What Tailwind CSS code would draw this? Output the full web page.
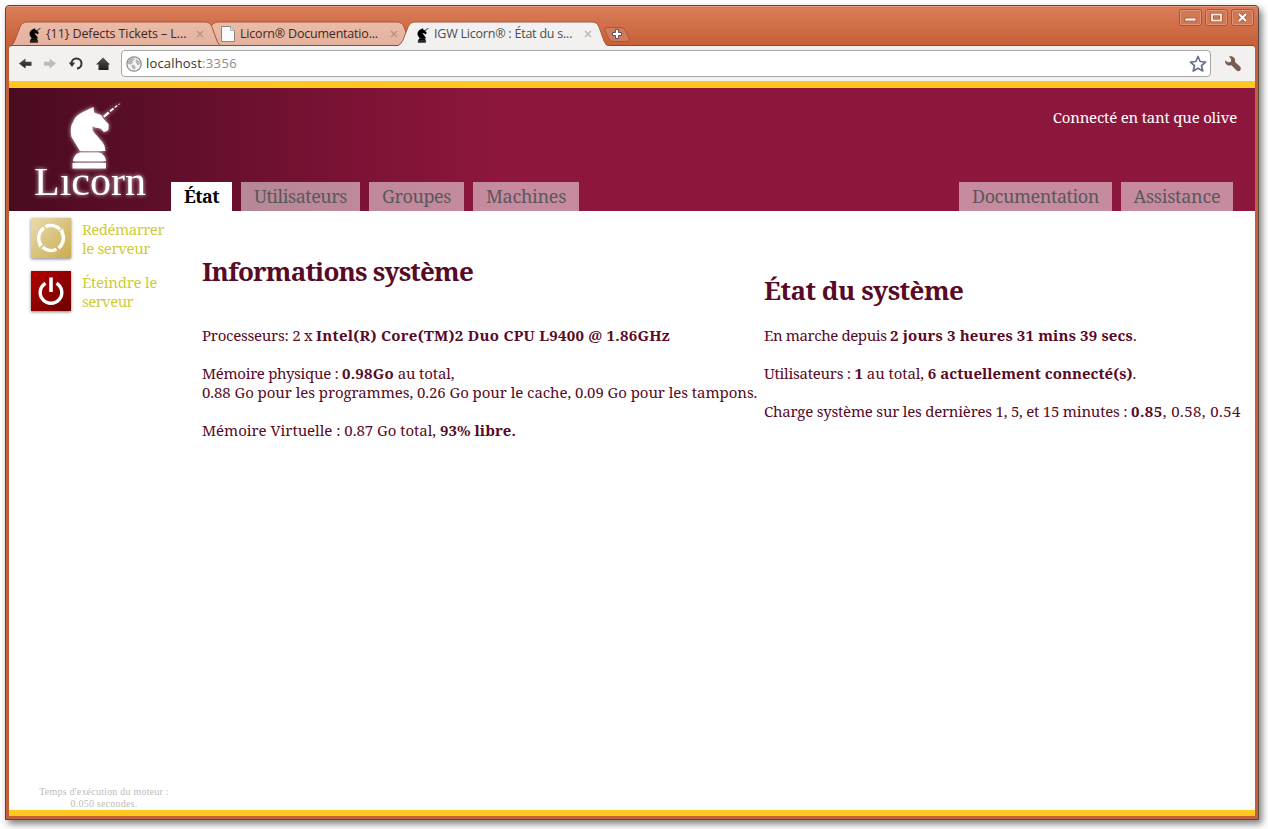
<!DOCTYPE html>
<html lang="fr">
<head>
<meta charset="utf-8">
<title>IGW Licorn® : État du système</title>
<script src="https://cdn.jsdelivr.net/npm/@tailwindcss/browser@4"></script>
</head>
<body class="w-[1268px] h-[829px] bg-white overflow-hidden">
<svg width="0" height="0" class="absolute">
  <symbol id="knight" viewBox="0 0 60 72">
    <path d="M10.500 65.500 V60 H44 V65.500 Z M11 58.300 C11.500 53.500 14 50.500 18 49.500 H36.500 C41 50.500 43.500 53.500 44 58.300 Z M18 48 L9.500 34 C8.500 30 8.500 26 9.500 22 L13 15 C16 11 20 9.500 24 7.500 L31.500 4 L32 9.500 L39 12 L41.500 16 L46.500 21 V26.500 L45 28 L42 29 L38.500 25.500 L33 24.500 L30.500 23 L30.500 27 C34 33 40 37 42.500 43 L43.500 48 Z"/>
    <path d="M41 13 L46 8.500 L47.500 10.500 L42.500 14.500 Z M47.500 7.500 L51 4.800 L52 6.300 L48.500 9 Z M52.300 4 L55 2 L55.700 3 L53 5 Z M56 1.500 L58.500 0 L57 2 Z"/>
  </symbol>
</svg>
<div class="ml-[5px] mt-[5px] inline-flex w-[1254px] h-[815px] flex-col overflow-hidden rounded-t-[4px] border border-[#5a4740] bg-[#c1613a] shadow-[3px_4px_7px_rgba(0,0,0,0.5)] align-top">

  <header class="relative flex h-[40px] w-full shrink-0 border-t border-[#e59a7c] bg-linear-to-b from-[#d97d59] to-[#c55f36]">
    <svg class="absolute left-0 top-0" width="1252" height="39" viewBox="6 7 1252 39">
      <defs><linearGradient id="tab" x1="0" y1="0" x2="0" y2="1"><stop offset="0" stop-color="#ecbca8"/><stop offset="1" stop-color="#e3b19d"/></linearGradient></defs>
      <path d="M209 46 L209 29 Q213 22 218 22 H397 Q402 22 404 27 L411 46 Z" fill="url(#tab)" stroke="#a7583a"/>
      <path d="M10 46 Q14 44 15 40 L20 27 Q22 22 27 22 H205 Q210 22 212 27 L217 41 Q219 46 222 46 Z" fill="url(#tab)" stroke="#a7583a"/>
      <path d="M604.500 30 Q604.500 27.500 607 27.500 H621 Q624 27.500 625 30 L629 38 Q630 41.500 627 41.500 H613 Q610 41.500 609 39 Z" fill="#cf7b5c" stroke="#a9583b"/>
      <path d="M10 45.500 H1254" stroke="#95472a"/>
      <path d="M398 46 Q401.500 44 403 40 L408 27 Q410 22 414 22 H592 Q597 22 599 27 L604 41 Q605.500 46 609 46 Z" fill="#f2f1f0"/>
      <path d="M398 45.500 Q401.500 44 403 40 L408 27 Q410 22 414 22 H592 Q597 22 599 27 L604 41 Q605.500 45.500 609 45.500" fill="none" stroke="#a7583a"/>
      <path d="M615.500 29.500 h3 v3 h3 v3 h-3 v3 h-3 v-3 h-3 v-3 h3z" fill="#fff" stroke="#5f5163"/>
    </svg>
    <div class="relative flex h-[22px] mt-[15px] font-['Open_Sans','Noto_Sans',sans-serif] text-[12.5px] leading-[24px] text-[#3c2a22] whitespace-pre">
      <div class="ml-[22px] flex w-[193px] items-center">
        <svg class="mt-[4px] h-[15px] w-[14px]" viewBox="5 2 54 66" fill="#000" stroke="#000" stroke-width="1.500"><use href="#knight" width="60" height="72"/></svg>
        <span class="ml-1 w-[150px] pt-[1px] tracking-[-0.1px]">{11} Defects Tickets – L...</span>
        <svg class="mt-[2px]" width="8" height="8"><path d="M1 1L7 7M7 1L1 7" stroke="#b89484" stroke-width="1.500"/></svg>
      </div>
      <div class="flex w-[195px] items-center">
        <svg class="mt-[2px]" width="14" height="16"><path d="M.5 .5H9.500L13.500 4.500V15.500H.500Z" fill="#fafafa" stroke="#8d8580"/><path d="M9.500 .5V4.500H13.500" fill="#ddd" stroke="#aaa"/></svg>
        <span class="ml-[5px] w-[150px] pt-[1px] tracking-[-0.2px]">Licorn® Documentatio...</span>
        <svg class="mt-[2px]" width="8" height="8"><path d="M1 1L7 7M7 1L1 7" stroke="#b89484" stroke-width="1.500"/></svg>
      </div>
      <div class="flex items-center text-[#4c4c4c]">
        <svg class="mt-[4px] h-[15px] w-[14px]" viewBox="5 2 54 66" fill="#000" stroke="#000" stroke-width="1.500"><use href="#knight" width="60" height="72"/></svg>
        <span class="ml-[4px] w-[150px] pt-[1px] tracking-[-0.22px]">IGW Licorn® : État du s...</span>
        <svg class="mt-[2px]" width="8" height="8"><path d="M1 1L7 7M7 1L1 7" stroke="#bdbab8" stroke-width="1.500"/></svg>
      </div>
    </div>
    <div class="relative ml-auto mr-[4px] mt-[2px] flex gap-[3px]">
      <svg width="23" height="17"><rect x=".5" y=".5" width="22" height="16" rx="2" fill="#d07755" stroke="#a95535"/><rect x="1.500" y="1.500" width="20" height="14" rx="1" fill="none" stroke="#df9477"/><rect x="6" y="9" width="11" height="3" fill="#fff" stroke="#a95535" stroke-width=".8"/></svg>
      <svg width="23" height="17"><rect x=".5" y=".5" width="22" height="16" rx="2" fill="#d07755" stroke="#a95535"/><rect x="1.500" y="1.500" width="20" height="14" rx="1" fill="none" stroke="#df9477"/><rect x="7" y="5.500" width="9" height="6" fill="none" stroke="#a95535" stroke-width="3.200"/><rect x="7" y="5.500" width="9" height="6" fill="none" stroke="#fdeee7" stroke-width="1.800"/></svg>
      <svg width="23" height="17"><rect x=".5" y=".5" width="22" height="16" rx="2" fill="#d07755" stroke="#a95535"/><rect x="1.500" y="1.500" width="20" height="14" rx="1" fill="none" stroke="#df9477"/><path d="M8 5L15 12M15 5L8 12" stroke="#a95535" stroke-width="3.500"/><path d="M8 5L15 12M15 5L8 12" stroke="#fff" stroke-width="2"/></svg>
    </div>
  </header>

  <div class="mx-[3px] flex h-[36px] shrink-0 items-center rounded-t-[3px] border-b border-[#c9c6c2] bg-[#f2f1f0]">
    <svg class="mr-1" width="108" height="36" viewBox="9 45 108 36">
      <defs><linearGradient id="ink" x1="0" y1="0" x2="0" y2="1"><stop offset="0" stop-color="#555"/><stop offset="1" stop-color="#1c1c1c"/></linearGradient></defs>
      <path d="M19 62.500 L25.500 57.500 V60.800 H31.500 V64.800 H25.500 V67.500 Z" fill="url(#ink)"/>
      <path d="M56 62.500 L49.500 57.500 V60.800 H44 V64.800 H49.500 V67.500 Z" fill="#bcbcbc"/>
      <path d="M71.500 62.500 A5 5 0 1 1 77 67.500" fill="none" stroke="#333" stroke-width="2"/>
      <path d="M68.800 61.500 H75.200 L72 66 Z" fill="#333"/>
      <path d="M96 63.500 L103 56.500 L110 63.500 H108.500 V69 H98.500 V63.500 Z" fill="url(#ink)"/>
    </svg>
    <div class="flex h-[27px] w-[1090px] items-center rounded-[4px] border border-[#a8a6a0] bg-white px-[4px] font-['Open_Sans','Noto_Sans',sans-serif] text-[13px] text-[#333]">
      <svg width="16" height="16" viewBox="0 0 16 16"><circle cx="8" cy="8" r="7.200" fill="#f4f4f4" stroke="#8b8b8b" stroke-width="1.300"/><path d="M2 5 Q4 2 7.500 2 L9 3.500 L6.500 5 L7 7 L4.500 8.500 L2 8Z M6 8.500 L9.500 10 L9 13.500 L7 13 L5.500 10.500Z M10 3 L13.500 5.500 L13.800 8 L12 9.500 L10.500 7.500 L9.500 5Z" fill="#b4b4b4"/></svg>
      <span class="ml-[4px] tracking-[0.17px]">localhost</span><span class="tracking-[0.37px] text-[#8c8c8c]">:3356</span>
      <svg class="ml-auto -mr-[1px]" width="18" height="18" viewBox="0 0 18 18"><path d="M9 1.500 L11.200 6.500 L16.600 7 L12.500 10.700 L13.800 16 L9 13.200 L4.200 16 L5.500 10.700 L1.400 7 L6.800 6.500 Z" fill="#fff" stroke="#66718a" stroke-width="1.700" stroke-linejoin="round"/></svg>
    </div>
    <svg class="ml-[13px]" width="18" height="18" viewBox="0 0 18 18"><path d="M5 1.500 C9 .5 12 3.500 11 7 L16.500 12 Q17.500 14 16 15.500 Q14.500 17 12.500 15.500 L7.500 10.300 C4 11.500 .8 9 1 5.500 L4.500 7.500 L7.200 6.500 L7 4 Z" fill="#7b5b4d"/></svg>
  </div>

  <div class="mx-[3px] flex h-[734px] shrink-0 flex-col border-y-[6px] border-[#ffc71f] bg-white font-['Noto_Serif','Droid_Serif','Liberation_Serif',serif]">
    <div class="flex h-[123px] shrink-0 bg-[#8c163c] bg-[linear-gradient(to_right,#4a0b20_0px,#5c0e28_140px,#7a1234_330px,#8c163c_485px)]">
      <svg class="shrink-0 overflow-visible [filter:drop-shadow(0_0_2px_rgba(255,255,255,0.75))]" width="162" height="123" viewBox="9 88 162 123" fill="#fff">
        <use href="#knight" x="62" y="103" width="60" height="72"/>
        <text x="34" y="195" font-family="Liberation Serif" font-size="40" textLength="112" lengthAdjust="spacingAndGlyphs">Lıcorn</text>
      </svg>
      <div class="flex flex-1 flex-col">
        <p class="mr-[18px] mt-[19px] text-right text-[15px] leading-[20px] tracking-[-0.2px] text-white">Connecté en tant que olive</p>
        <nav class="mt-auto flex gap-[9px] text-[18px] leading-[28px] text-[#58585c] whitespace-nowrap">
          <a class="h-[29px] w-[61px] bg-white text-center font-bold tracking-[-0.55px] text-black">État</a>
          <a class="h-[29px] w-[119px] bg-white/50 text-center tracking-[-0.46px]">Utilisateurs</a>
          <a class="h-[29px] w-[95px] bg-white/50 text-center tracking-[-0.43px]">Groupes</a>
          <a class="h-[29px] w-[106px] bg-white/50 text-center tracking-[-0.3px]">Machines</a>
          <a class="ml-auto h-[29px] w-[153px] bg-white/50 text-center tracking-[-0.43px]">Documentation</a>
          <a class="mr-[22px] h-[29px] w-[112px] bg-white/50 text-center tracking-[-0.24px]">Assistance</a>
        </nav>
      </div>
    </div>

    <div class="flex min-h-0 flex-1">
      <aside class="flex w-[193px] shrink-0 flex-col text-[15px] leading-[19px] text-[#cfcc38] whitespace-nowrap">
        <a class="ml-[22px] mt-[7px] flex h-[53px]">
          <svg class="h-10 w-10 shadow-[0_1px_3px_rgba(0,0,0,0.5)]" viewBox="0 0 40 40"><defs><linearGradient id="gold" x1="0" y1="0" x2="1" y2="1"><stop offset="0" stop-color="#e9dbb0"/><stop offset="1" stop-color="#c9ad4c"/></linearGradient></defs><rect width="40" height="40" fill="url(#gold)"/><g fill="none" stroke="#fff" stroke-width="3.400"><path d="M9.500 26.500 A12.500 12.500 0 0 1 13 9.800"/><path d="M14.500 8.800 A12.500 12.500 0 0 1 29 11.500"/><path d="M30.500 13.500 A12.500 12.500 0 0 1 27.500 30"/><path d="M25.500 31.200 A12.500 12.500 0 0 1 11.500 29"/></g><path d="M7 24.500 L12 26.500 L8 29.500Z M33 15.500 L28 13.500 L32 10.500Z" fill="#fff"/></svg>
          <span class="ml-[11px] mt-[2px]"><span class="block tracking-[-0.5px]">Redémarrer</span><span class="block tracking-[-0.37px]">le serveur</span></span>
        </a>
        <a class="ml-[22px] flex">
          <svg class="h-10 w-10 shadow-[0_1px_3px_rgba(0,0,0,0.5)]" viewBox="0 0 40 40"><defs><linearGradient id="red" x1="0" y1="0" x2="1" y2="1"><stop offset="0" stop-color="#b50000"/><stop offset="1" stop-color="#6c0000"/></linearGradient></defs><rect width="40" height="40" fill="url(#red)"/><path d="M14.500 12.200 A10.800 10.800 0 1 0 25.500 12.200" fill="none" stroke="#fff" stroke-width="3.400"/><path d="M20 6.500 V21" stroke="#fff" stroke-width="3.600"/></svg>
          <span class="ml-[11px] mt-[2px]"><span class="block tracking-[-0.27px]">Éteindre le</span><span class="block tracking-[-0.58px]">serveur</span></span>
        </a>
        <p class="mt-auto w-[190px] text-center font-['Liberation_Serif',serif] text-[10px] leading-[12px] tracking-[0.22px] text-[#bcbcbc]">Temps d'exécution du moteur :<br>0.050 secondes.</p>
      </aside>

      <main class="flex flex-1 text-[15px] leading-[19px] text-[#580a26] whitespace-nowrap">
        <section class="w-[562px] shrink-0 pt-[44px] *:whitespace-pre">
          <h1 class="mb-[38px] text-[26px] font-bold leading-[33px] tracking-[-0.82px]">Informations système</h1>
          <p class="mb-[19px]"><span class="tracking-[-0.24px]">Processeurs: 2 x </span><b class="tracking-[0.26px]">Intel(R) Core(TM)2 Duo CPU L9400 @ 1.86GHz</b></p>
          <p><span class="tracking-[-0.32px]">Mémoire physique : </span><b class="tracking-[0.23px]">0.98Go</b><span class="tracking-[-0.15px]"> au total,</span></p>
          <p class="mb-[19px] tracking-[-0.06px]">0.88 Go pour les programmes, 0.26 Go pour le cache, 0.09 Go pour les tampons.</p>
          <p><span class="tracking-[-0.03px]">Mémoire Virtuelle : 0.87 Go total, </span><b class="tracking-[0.04px]">93% libre.</b></p>
        </section>
        <section class="pt-[63px] *:whitespace-pre">
          <h1 class="mb-[19px] text-[26px] font-bold leading-[33px] tracking-[-0.53px]">État du système</h1>
          <p class="mb-[19px]"><span class="tracking-[-0.4px]">En marche depuis </span><b class="tracking-[0.15px]">2 jours 3 heures 31 mins 39 secs</b>.</p>
          <p class="mb-[19px]"><span class="tracking-[-0.25px]">Utilisateurs : </span><b>1</b><span class="tracking-[-0.08px]"> au total, </span><b class="tracking-[0.03px]">6 actuellement connecté(s)</b>.</p>
          <p><span class="tracking-[-0.22px]">Charge système sur les dernières 1, 5, et 15 minutes : </span><b class="tracking-[0.5px]">0.85</b><span class="tracking-[0.4px]">, 0.58, 0.54</span></p>
        </section>
      </main>
    </div>
  </div>
</div>
</body>
</html>
